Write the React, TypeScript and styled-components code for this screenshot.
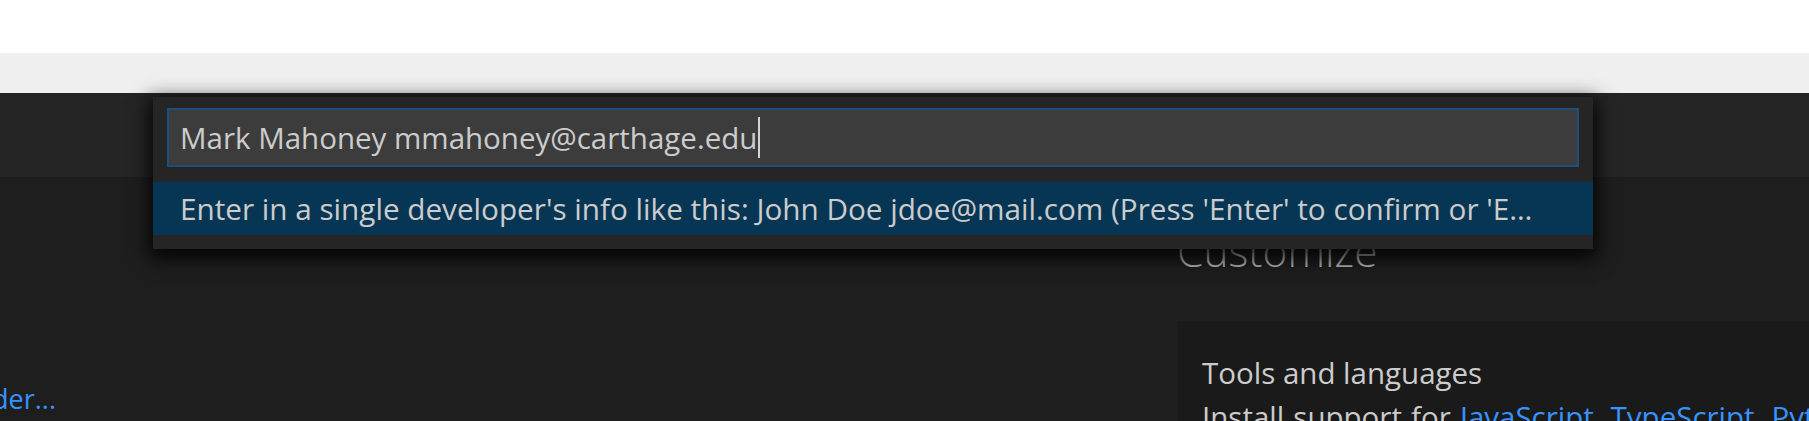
import React from "react";
import styled, { createGlobalStyle } from "styled-components";

const GlobalStyle = createGlobalStyle`
  html, body { margin: 0; padding: 0; background: #1e1e1e; overflow: hidden; }
  * { box-sizing: border-box; }
`;

const FONT = `"Open Sans", "Noto Sans", sans-serif`;

const Page = styled.div`
  position: relative;
  width: 1809px;
  height: 421px;
  display: flex;
  flex-direction: column;
  font-family: ${FONT};
  overflow: hidden;
`;

const BrowserBar = styled.div`
  height: 53px;
  background: #ffffff;
`;

const TabStrip = styled.div`
  height: 40px;
  background: #efefef;
`;

const TitleBar = styled.div`
  height: 84px;
  background: #252526;
`;

const Editor = styled.div`
  flex: 1;
  background: #1e1e1e;
  display: grid;
  grid-template-columns: 56px 1fr 632px;
  overflow: hidden;
`;

const StartColumn = styled.div`
  display: flex;
  justify-content: flex-end;
  overflow: hidden;
  padding-top: 204px;
`;

const Link = styled.span<{ $size?: number }>`
  color: #3794ff;
  font-size: ${(p) => p.$size ?? 27}px;
  line-height: 36px;
  white-space: nowrap;
`;

const CustomizeColumn = styled.div`
  display: flex;
  flex-direction: column;
  padding-top: 47px;
`;

const Heading = styled.h2`
  margin: 0;
  font-size: 42.5px;
  font-weight: 300;
  line-height: 53px;
  color: #b8b8b8;
  white-space: nowrap;
`;

const Panel = styled.div`
  margin-top: 44px;
  margin-left: 1px;
  background: #1a1a1a;
  padding: 30px 0 0 24px;
  flex: 1;
`;

const PanelTitle = styled.div`
  font-size: 29.5px;
  line-height: 44px;
  color: #cccccc;
  white-space: nowrap;
`;

const PanelText = styled.div`
  margin-top: 2px;
  font-size: 29.5px;
  line-height: 40px;
  color: #cccccc;
  white-space: nowrap;
  word-spacing: 1.5px;
`;

const QuickOpen = styled.div`
  position: absolute;
  top: 97px;
  left: 153px;
  width: 1440px;
  background: #252526;
  padding: 11px 0 14px;
  box-shadow: 0 6px 18px 4px rgba(0, 0, 0, 0.85);
  display: flex;
  flex-direction: column;
  gap: 15px;
`;

const InputBox = styled.div`
  margin: 0 14px;
  height: 59px;
  background: #3c3c3c;
  border: 2px solid #1d4f78;
  display: flex;
  align-items: center;
  padding-left: 11px;
  font-size: 29.5px;
  color: #cccccc;
  white-space: nowrap;
`;

const Caret = styled.span`
  display: inline-block;
  width: 2px;
  height: 41px;
  margin-left: 1px;
  background: #d4d4d4;
`;

const Row = styled.div<{ $active?: boolean }>`
  height: 53px;
  display: flex;
  align-items: center;
  padding: 0 27px;
  background: ${(p) => (p.$active ? "#073655" : "transparent")};
  color: #cccccc;
  font-size: 29.7px;
  white-space: nowrap;
  overflow: hidden;
`;

export default function App() {
  return (
    <>
      <GlobalStyle />
      <Page>
        <BrowserBar />
        <TabStrip />
        <TitleBar />
        <Editor>
          <StartColumn>
            <Link>Open folder...</Link>
          </StartColumn>
          <div />
          <CustomizeColumn>
            <Heading>Customize</Heading>
            <Panel>
              <PanelTitle>Tools and languages</PanelTitle>
              <PanelText>
                Install support for <Link $size={29.5}>JavaScript, TypeScript, Python, PHP, Azure, Docker</Link>
              </PanelText>
            </Panel>
          </CustomizeColumn>
        </Editor>
        <QuickOpen>
          <InputBox>
            Mark Mahoney mmahoney@carthage.edu
            <Caret />
          </InputBox>
          <Row $active>
            Enter in a single developer's info like this: John Doe jdoe@mail.com (Press 'Enter' to confirm or 'E…
          </Row>
        </QuickOpen>
      </Page>
    </>
  );
}
